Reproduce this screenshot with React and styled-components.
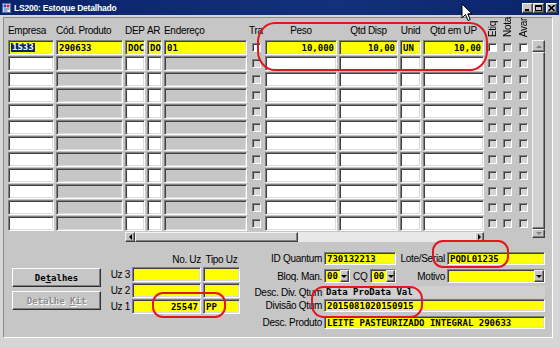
import React from 'react';
import styled, { createGlobalStyle } from 'styled-components';

const YELLOW = '#ffff00';
const WHITE = '#ffffff';
const GRAY = '#c6c6c6';

const GlobalStyle = createGlobalStyle`
  html, body {
    margin: 0;
    padding: 0;
    background: #d4d4d4;
  }
  body {
    font-family: "Liberation Sans", Arial, sans-serif;
    color: #000;
  }
`;

const sunken = `
  box-sizing: border-box;
  border-style: solid;
  border-width: 1px;
  border-color: #808080 #ffffff #ffffff #808080;
  box-shadow: inset 1px 1px 0 #404040, inset -1px -1px 0 #dcdcdc;
`;

const raised = `
  box-sizing: border-box;
  border-style: solid;
  border-width: 1px;
  border-color: #f4f4f4 #404040 #404040 #f4f4f4;
  box-shadow: inset -1px -1px 0 #808080;
`;

const Window = styled.div`
  position: relative;
  width: 559px;
  height: 347px;
  display: flex;
  flex-direction: column;
  background: #d6d6d6;
  overflow: hidden;
`;

const TitleBar = styled.div`
  height: 15px;
  display: flex;
  align-items: center;
  padding: 0 2px;
  background: linear-gradient(90deg, #0a246a 0%, #13307c 60%, #0a246a 100%);
  color: #fff;
`;

const TitleText = styled.span`
  margin-left: 3px;
  font: bold 8.5px "Liberation Sans", Arial, sans-serif;
  letter-spacing: -0.2px;
  white-space: nowrap;
`;

const WinButtons = styled.div`
  margin-left: auto;
  display: flex;
  align-items: center;
`;

const WinButton = styled.div`
  ${raised}
  width: 11px;
  height: 10px;
  margin-left: ${p => p.$gap || 0}px;
  background: #c6c6c6;
  display: flex;
  align-items: center;
  justify-content: center;
`;

const Body = styled.div`
  flex: 1;
  display: flex;
  padding: 2px 6px 9px 3px;
`;

const Panel = styled.div`
  flex: 1;
  display: flex;
  flex-direction: column;
  border: 1px solid;
  border-color: #8a8a8a #ffffff #ffffff #8a8a8a;
  background: ${GRAY};
  padding: 0 0 0 4px;
`;

const Grid = styled.div`
  display: grid;
  grid-template-columns: 46px 67px 20px 15px 83px 14px 72px 59px 21px 61px 12px 14px 14px 13px;
  grid-template-rows: 21px repeat(12, 15px) 10px;
  column-gap: 2px;
  row-gap: 1px;
`;

const Head = styled.div`
  align-self: end;
  justify-self: ${p => p.$align || 'start'};
  margin-bottom: 2px;
  font-size: 10px;
  line-height: 12px;
  letter-spacing: -0.3px;
  white-space: nowrap;
`;

const VHead = styled.div`
  align-self: end;
  justify-self: center;
  margin-bottom: 2px;
  writing-mode: vertical-rl;
  transform: rotate(180deg);
  font-size: 10px;
  line-height: 11px;
  letter-spacing: -0.3px;
  white-space: nowrap;
`;

const Field = styled.div`
  ${p => (p.$flat ? 'box-sizing: border-box;' : sunken)}
  width: ${p => (p.$w ? `${p.$w}px` : 'auto')};
  flex: ${p => (p.$w ? 'none' : '1')};
  height: 100%;
  min-width: 0;
  display: flex;
  align-items: center;
  justify-content: ${p => (p.$align === 'right' ? 'flex-end' : 'flex-start')};
  padding: 0 2px;
  background: ${p => p.$bg || WHITE};
  font: bold 9px "DejaVu Sans Mono", "Liberation Mono", monospace;
  white-space: nowrap;
  overflow: hidden;
`;

const Selected = styled.span`
  background: #0a246a;
  color: #fff;
  padding: 0 1px;
  line-height: 9px;
`;

const Check = styled.div`
  box-sizing: border-box;
  justify-self: center;
  align-self: center;
  width: 9px;
  height: 9px;
  border: 1px solid;
  border-color: #808080 #ffffff #ffffff #808080;
  box-shadow: inset 1px 1px 0 #404040;
  background: ${p => (p.$on ? '#ffffff' : '#d6d6d6')};
`;

const VScroll = styled.div`
  grid-column: 14;
  grid-row: 2 / 15;
  align-self: start;
  height: 198px;
  display: flex;
  flex-direction: column;
  background: #e4e4e4;
`;

const HScroll = styled.div`
  grid-column: 3 / 11;
  grid-row: 14;
  display: flex;
  background: #e8e8e8;
`;

const ScrollBtn = styled.div`
  ${raised}
  flex: none;
  width: ${p => p.$w || 'auto'};
  height: ${p => p.$h || 'auto'};
  background: #c6c6c6;
  display: flex;
  align-items: center;
  justify-content: center;
`;

const Thumb = styled.div`
  ${raised}
  flex: ${p => (p.$w ? 'none' : '1')};
  width: ${p => (p.$w ? `${p.$w}px` : 'auto')};
  background: #d2d2d2;
`;

const Arrow = styled.span`
  width: 0;
  height: 0;
  border: 3px solid transparent;
  ${p => p.$dir === 'up' && `border-top-width: 0; border-bottom-color: ${p.$c};`}
  ${p => p.$dir === 'down' && `border-bottom-width: 0; border-top-color: ${p.$c};`}
  ${p => p.$dir === 'left' && `border-left-width: 0; border-right-color: ${p.$c};`}
  ${p => p.$dir === 'right' && `border-right-width: 0; border-left-color: ${p.$c};`}
`;

const Bottom = styled.div`
  display: flex;
  align-items: flex-start;
  margin-top: 2px;
  padding-left: 4px;
`;

const ButtonCol = styled.div`
  width: 89px;
  margin-top: 24px;
  display: flex;
  flex-direction: column;
  gap: 4px;
`;

const Button = styled.div`
  ${raised}
  height: 19px;
  border-color: #ffffff #303030 #303030 #ffffff;
  background: #c6c6c6;
  display: flex;
  align-items: center;
  justify-content: center;
  font: bold 9px "DejaVu Sans Mono", "Liberation Mono", monospace;
  color: ${p => (p.$disabled ? '#8c8c8c' : '#000')};
  text-shadow: ${p => (p.$disabled ? '1px 1px 0 #ffffff' : 'none')};
  white-space: pre;
`;

const UzBlock = styled.div`
  margin-left: 3px;
  margin-top: 8px;
  display: grid;
  grid-template-columns: 26px 69px 37px;
  grid-template-rows: 14px repeat(3, 15px);
  column-gap: 2px;
  row-gap: 1px;
`;

const UzLabel = styled.div`
  align-self: ${p => (p.$head ? 'end' : 'center')};
  text-align: ${p => p.$align || 'right'};
  font-size: 10px;
  line-height: 12px;
  letter-spacing: -0.3px;
  white-space: nowrap;
`;

const Form = styled.div`
  margin-left: 4px;
  margin-top: 8px;
  width: 301px;
  display: flex;
  flex-direction: column;
`;

const FormRow = styled.div`
  display: grid;
  grid-template-columns: 78px 221px;
  column-gap: 2px;
  height: ${p => p.$h}px;
  margin-top: ${p => p.$mt || 0}px;
`;

const FormLabel = styled.div`
  display: flex;
  align-items: center;
  justify-content: flex-end;
  flex: ${p => (p.$grow ? '1' : 'none')};
  padding: 0 ${p => p.$pad || 0}px;
  font-size: 10px;
  letter-spacing: -0.3px;
  white-space: nowrap;
`;

const Cell = styled.div`
  display: flex;
  align-items: stretch;
  min-width: 0;
`;

const Combo = styled.div`
  ${sunken}
  display: flex;
  width: ${p => p.$w}px;
  flex: none;
  background: ${YELLOW};
`;

const ComboText = styled.span`
  flex: 1;
  padding: 0 2px;
  display: flex;
  align-items: center;
  font: bold 9px "DejaVu Sans Mono", "Liberation Mono", monospace;
`;

const ComboBtn = styled.div`
  ${raised}
  width: 10px;
  background: #c6c6c6;
  display: flex;
  align-items: center;
  justify-content: center;
`;

const Mark = styled.div`
  position: absolute;
  left: ${p => p.$x}px;
  top: ${p => p.$y}px;
  width: ${p => p.$w}px;
  height: ${p => p.$h}px;
  box-sizing: border-box;
  border: 2.5px solid #e3151d;
  border-radius: ${p => p.$r};
  pointer-events: none;
`;

const Cursor = styled.svg`
  position: absolute;
  left: 461px;
  top: 3px;
`;

const columns = [
  { head: 'Empresa' },
  { head: 'Cód. Produto', locked: true },
  { head: 'DEP' },
  { head: 'AR' },
  { head: 'Endereço', locked: true },
  { head: 'Tra', check: true },
  { head: 'Peso', headAlign: 'center', align: 'right' },
  { head: 'Qtd Disp', headAlign: 'center', align: 'right' },
  { head: 'Unid', headAlign: 'center' },
  { head: 'Qtd em UP', headAlign: 'center', align: 'right' },
  { head: 'Etiq', check: true, vertical: true },
  { head: 'Nota', check: true, vertical: true },
  { head: 'Avar', check: true, vertical: true },
];

const current = ['1533', '290633', 'DOC', 'DO', '01', true, '10,000', '10,00', 'UN', '10,00', true, false, true];

const uz = [
  { label: 'Uz 3', no: '', tipo: '' },
  { label: 'Uz 2', no: '', tipo: '' },
  { label: 'Uz 1', no: '25547', tipo: 'PP' },
];

const TitleIcon = () => (
  <svg width="9" height="10" viewBox="0 0 9 10">
    <rect x="0.5" y="0.5" width="8" height="9" fill="#fff" stroke="#5a6fa8" />
    <rect x="1.5" y="1.5" width="3" height="3" fill="#1b4fc4" />
    <rect x="5" y="1.5" width="2.5" height="3" fill="#d22" />
    <rect x="1.5" y="5.5" width="6" height="1" fill="#1b4fc4" />
    <rect x="1.5" y="7.5" width="4" height="1" fill="#1b4fc4" />
  </svg>
);

const Glyph = ({ kind }) => (
  <svg width="7" height="6" viewBox="0 0 7 6">
    {kind === 'min' && <rect x="1" y="4" width="4" height="2" fill="#000" />}
    {kind === 'max' && (
      <rect x="0.5" y="0.5" width="6" height="5" fill="none" stroke="#000" strokeWidth="1" />
    )}
    {kind === 'max' && <rect x="0" y="0" width="7" height="2" fill="#000" />}
    {kind === 'close' && <path d="M0.5 0 L6.5 6 M6.5 0 L0.5 6" stroke="#000" strokeWidth="1.6" />}
  </svg>
);

export default function App() {
  return (
    <>
      <GlobalStyle />
      <Window>
        <TitleBar>
          <TitleIcon />
          <TitleText>LS200: Estoque Detalhado</TitleText>
          <WinButtons>
            <WinButton><Glyph kind="min" /></WinButton>
            <WinButton><Glyph kind="max" /></WinButton>
            <WinButton $gap={2}><Glyph kind="close" /></WinButton>
          </WinButtons>
        </TitleBar>

        <Body>
          <Panel>
            <Grid>
              {columns.map(c =>
                c.vertical ? (
                  <VHead key={c.head}>{c.head}</VHead>
                ) : (
                  <Head key={c.head} $align={c.headAlign}>{c.head}</Head>
                )
              )}
              <div />

              {Array.from({ length: 12 }, (_, r) =>
                columns.map((c, i) => {
                  const v = r === 0 ? current[i] : null;
                  const key = `${r}-${i}`;
                  if (c.check) return <Check key={key} $on={v === true} />;
                  const bg = r === 0 ? YELLOW : c.locked ? GRAY : WHITE;
                  return (
                    <Field key={key} $bg={bg} $align={c.align}>
                      {i === 0 && v ? <Selected>{v}</Selected> : v}
                    </Field>
                  );
                })
              )}

              <VScroll>
                <ScrollBtn $h="12px"><Arrow $dir="up" $c="#808080" /></ScrollBtn>
                <Thumb />
                <ScrollBtn $h="9px"><Arrow $dir="down" $c="#808080" /></ScrollBtn>
              </VScroll>

              <HScroll>
                <ScrollBtn $w="10px"><Arrow $dir="left" $c="#000" /></ScrollBtn>
                <Thumb $w={163} />
                <div style={{ flex: 1 }} />
                <ScrollBtn $w="9px"><Arrow $dir="right" $c="#000" /></ScrollBtn>
              </HScroll>
            </Grid>

            <Bottom>
              <ButtonCol>
                <Button>De<u>t</u>alhes</Button>
                <Button $disabled>Detalhe <u>K</u>it</Button>
              </ButtonCol>

              <UzBlock>
                <div />
                <UzLabel $head>No. Uz</UzLabel>
                <UzLabel $head $align="center">Tipo Uz</UzLabel>
                {uz.map(u => (
                  <React.Fragment key={u.label}>
                    <UzLabel>{u.label}</UzLabel>
                    <Field $bg={YELLOW} $align="right">{u.no}</Field>
                    <Field $bg={YELLOW}>{u.tipo}</Field>
                  </React.Fragment>
                ))}
              </UzBlock>

              <Form>
                <FormRow $h={13}>
                  <FormLabel>ID Quantum</FormLabel>
                  <Cell>
                    <Field $bg={YELLOW} $w={72}>730132213</Field>
                    <FormLabel $grow $pad={2}>Lote/Serial</FormLabel>
                    <Field $bg={YELLOW} $w={98}>PQDL01235</Field>
                  </Cell>
                </FormRow>
                <FormRow $h={14} $mt={4}>
                  <FormLabel>Bloq. Man.</FormLabel>
                  <Cell>
                    <Combo $w={26}>
                      <ComboText>00</ComboText>
                      <ComboBtn><Arrow $dir="down" $c="#000" /></ComboBtn>
                    </Combo>
                    <FormLabel $pad={3}>CQ</FormLabel>
                    <Combo $w={26}>
                      <ComboText>00</ComboText>
                      <ComboBtn><Arrow $dir="down" $c="#000" /></ComboBtn>
                    </Combo>
                    <FormLabel $grow $pad={2}>Motivo</FormLabel>
                    <Combo $w={98}>
                      <ComboText />
                      <ComboBtn><Arrow $dir="down" $c="#000" /></ComboBtn>
                    </Combo>
                  </Cell>
                </FormRow>
                <FormRow $h={12} $mt={3}>
                  <FormLabel>Desc. Div. Qtum</FormLabel>
                  <Field $flat $bg="#d0d0d0">Data ProData Val</Field>
                </FormRow>
                <FormRow $h={13} $mt={1}>
                  <FormLabel>Divisão Qtum</FormLabel>
                  <Field $bg={YELLOW}>2015081020150915</Field>
                </FormRow>
                <FormRow $h={13} $mt={4}>
                  <FormLabel>Desc. Produto</FormLabel>
                  <Field $bg={YELLOW}>LEITE PASTEURIZADO INTEGRAL 290633</Field>
                </FormRow>
              </Form>
            </Bottom>
          </Panel>
        </Body>

        <Mark $x={257} $y={22} $w={231} $h={49} $r="18px / 20px" />
        <Mark $x={152} $y={292} $w={74} $h={26} $r="11px" />
        <Mark $x={432} $y={240} $w={77} $h={28} $r="11px" />
        <Mark $x={311} $y={286} $w={112} $h={32} $r="13px" />

        <Cursor width="12" height="19" viewBox="0 0 12 19">
          <path
            d="M1 1 L1 15 L4.5 11.5 L7 17.5 L9.2 16.5 L6.8 10.8 L11 10.8 Z"
            fill="#fff"
            stroke="#000"
            strokeWidth="1"
            strokeLinejoin="miter"
          />
        </Cursor>
      </Window>
    </>
  );
}
